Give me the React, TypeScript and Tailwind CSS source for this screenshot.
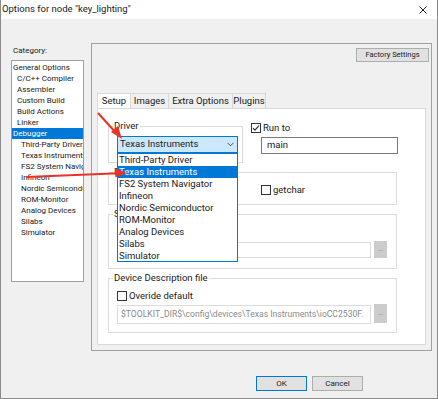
import React from 'react';

const categories = [
  { name: 'General Options', sub: false },
  { name: 'C/C++ Compiler', sub: true },
  { name: 'Assembler', sub: true },
  { name: 'Custom Build', sub: true },
  { name: 'Build Actions', sub: true },
  { name: 'Linker', sub: true },
  { name: 'Debugger', sub: false, selected: true },
  { name: 'Third-Party Driver', sub: true, deep: true },
  { name: 'Texas Instruments', sub: true, deep: true },
  { name: 'FS2 System Navigator', sub: true, deep: true },
  { name: 'Infineon', sub: true, deep: true },
  { name: 'Nordic Semiconductor', sub: true, deep: true },
  { name: 'ROM-Monitor', sub: true, deep: true },
  { name: 'Analog Devices', sub: true, deep: true },
  { name: 'Silabs', sub: true, deep: true },
  { name: 'Simulator', sub: true, deep: true },
];

const drivers = [
  'Third-Party Driver',
  'Texas Instruments',
  'FS2 System Navigator',
  'Infineon',
  'Nordic Semiconductor',
  'ROM-Monitor',
  'Analog Devices',
  'Silabs',
  'Simulator',
];

const tabs = [
  { name: 'Setup', w: 'w-[34px]' },
  { name: 'Images', w: 'w-[39px]' },
  { name: 'Extra Options', w: 'w-[65px]' },
  { name: 'Plugins', w: 'w-[34px]' },
];

function Check({ checked }: { checked?: boolean }) {
  return (
    <span className="w-[10px] h-[10px] border border-[#333] bg-white flex items-center justify-center shrink-0">
      {checked && (
        <svg width="8" height="8" viewBox="0 0 8 8">
          <path d="M1 4.2 L3 6.2 L7 1.5" fill="none" stroke="#222" strokeWidth="1.1" />
        </svg>
      )}
    </span>
  );
}

function Group({ label, className, children }: { label: string; className?: string; children?: React.ReactNode }) {
  return (
    <div className={`relative border border-[#dcdcdc] ${className ?? ''}`}>
      <span className="absolute -top-[8px] left-[4px] bg-white px-[1px] leading-[14px] whitespace-nowrap">{label}</span>
      {children}
    </div>
  );
}

function Browse() {
  return (
    <div className="w-[13px] bg-[#cccccc] flex items-center justify-center text-[7px] text-[#8a8a8a] leading-none">...</div>
  );
}

export default function App() {
  return (
    <div
      className="relative w-[438px] h-[399px] bg-[#f0f0f0] border-l border-r border-b border-[#8a8a8a] overflow-hidden text-[9.5px] text-[#1a1a1a]"
      style={{ fontFamily: 'Roboto, "Noto Sans", sans-serif' }}
    >
      {/* title bar */}
      <div className="h-[19px] bg-white flex items-center justify-between pl-[1px] pr-[10px]">
        <span className="text-[9.5px]">Options for node "key_lighting"</span>
        <svg width="8" height="8" viewBox="0 0 8 8">
          <path d="M0.5 0.5 L7.5 7.5 M7.5 0.5 L0.5 7.5" stroke="#222" strokeWidth="1" />
        </svg>
      </div>

      <div className="flex">
        {/* category column */}
        <div className="ml-[10px] w-[73px] pt-[25px]">
          <div className="h-[13px] leading-[13px] pl-[2px] text-[8px]">Category:</div>
          <div className="mt-[3px] h-[222px] bg-white border border-[#a0a0a0] pt-[1px] text-[8px]">
            {categories.map((c) => (
              <div
                key={c.name}
                className={`h-[11px] leading-[11px] whitespace-nowrap overflow-hidden ${c.deep ? 'pl-[9px]' : c.sub ? 'pl-[5px]' : 'pl-[1px]'} ${c.selected ? 'bg-[#0078d7] text-white' : ''}`}
              >
                {c.name}
              </div>
            ))}
          </div>
        </div>

        {/* options frame */}
        <div className="ml-[7px] mt-[24px] w-[341px] h-[308px] border border-[#a0a0a0] flex flex-col">
          <div className="flex justify-end pt-[4px] pr-[2px]">
            <button className="w-[73px] h-[14px] bg-[#e1e1e1] border border-[#adadad] text-[7.5px] leading-[12px]">
              Factory Settings
            </button>
          </div>

          <div className="pl-[5px] mt-[31px]">
            <div className="flex h-[15px] items-end">
              {tabs.map((t, i) => (
                <div
                  key={t.name}
                  className={`h-[15px] ${t.w} text-center leading-[14px] border border-b-0 border-[#d9d9d9] ${i === 0 ? 'bg-white' : 'bg-[#f0f0f0] -ml-px'}`}
                >
                  {t.name}
                </div>
              ))}
            </div>

            <div className="relative w-[329px] h-[237px] bg-white border border-[#d9d9d9] pl-[10px]">
              {/* row 1 */}
              <div className="flex">
                <Group label="Driver" className="mt-[17px] w-[135px] h-[37px] pt-[9px] pl-[8px]">
                  <div className="w-[121px] h-[17px] bg-[#cce8ff] border border-[#0078d7] flex items-center justify-between pl-[2px] pr-[3px]">
                    <span>Texas Instruments</span>
                    <svg width="7" height="5" viewBox="0 0 7 5">
                      <path d="M0.5 0.8 L3.5 3.8 L6.5 0.8" fill="none" stroke="#444" strokeWidth="0.9" />
                    </svg>
                  </div>
                </Group>
                <div className="ml-[8px] mt-[14px] flex flex-col">
                  <label className="flex items-center gap-[2px] leading-[10px]">
                    <Check checked />
                    <span>Run to</span>
                  </label>
                  <div className="ml-[10px] mt-[4px] w-[137px] h-[17px] border border-[#7a7a7a] flex items-center pl-[5px]">
                    main
                  </div>
                </div>
              </div>

              {/* row 2 */}
              <Group label="Breakpoint on exit, and on" className="mt-[9px] w-[289px] h-[33px] pt-[12px] pl-[152px]">
                <label className="flex items-center gap-[2px] leading-[10px]">
                  <Check />
                  <span>getchar</span>
                </label>
              </Group>

              {/* row 3 */}
              <Group label="Setup macros" className="mt-[9px] w-[289px] h-[55px] pt-[10px] pl-[8px]">
                <label className="flex items-center gap-[2px] leading-[10px]">
                  <Check />
                  <span>Use macro file(s)</span>
                </label>
                <div className="mt-[6px] flex gap-[3px]">
                  <div className="w-[254px] h-[16px] mt-[1px] border border-[#dcdcdc]" />
                  <Browse />
                </div>
              </Group>

              {/* row 4 */}
              <Group label="Device Description file" className="mt-[9px] w-[289px] h-[55px] pt-[12px] pl-[8px]">
                <label className="flex items-center gap-[2px] leading-[10px]">
                  <Check />
                  <span>Overide default</span>
                </label>
                <div className="mt-[3px] flex gap-[3px] h-[19px]">
                  <div className="w-[254px] h-[19px] mt-[1px] border border-[#dcdcdc] flex items-center pl-[3px] text-[#8c8c8c] text-[8.6px] whitespace-nowrap overflow-hidden">
                    $TOOLKIT_DIR$\config\devices\Texas Instruments\ioCC2530F.
                  </div>
                  <Browse />
                </div>
              </Group>

              {/* open dropdown list */}
              <div className="absolute left-[19px] top-[44px] w-[121px] h-[109px] bg-white border border-[#0078d7]">
                {drivers.map((d, i) => (
                  <div
                    key={d}
                    className={`h-[12px] leading-[12px] pl-[1px] whitespace-nowrap ${i === 1 ? 'bg-[#0078d7] text-white' : ''}`}
                  >
                    {d}
                  </div>
                ))}
              </div>
            </div>
          </div>
        </div>
      </div>

      {/* dialog buttons */}
      <div className="flex justify-end gap-[5px] mt-[25px] pr-[74px]">
        <button className="w-[51px] h-[15px] bg-[#e1e1e1] border border-[#0078d7] text-[8px] leading-[13px]">OK</button>
        <button className="w-[51px] h-[15px] bg-[#e1e1e1] border border-[#adadad] text-[8px] leading-[13px]">Cancel</button>
      </div>

      {/* annotation arrows */}
      <svg className="absolute left-0 top-0 pointer-events-none" width="438" height="399">
        <line x1="97" y1="113" x2="116" y2="134" stroke="#e8322a" strokeWidth="2" />
        <polygon points="121,139 110,132 117,126" fill="#e8322a" />
        <line x1="25" y1="177" x2="118" y2="173.3" stroke="#e8322a" strokeWidth="2" />
        <polygon points="126,173 114,168.5 114.4,177.5" fill="#e8322a" />
      </svg>
    </div>
  );
}
